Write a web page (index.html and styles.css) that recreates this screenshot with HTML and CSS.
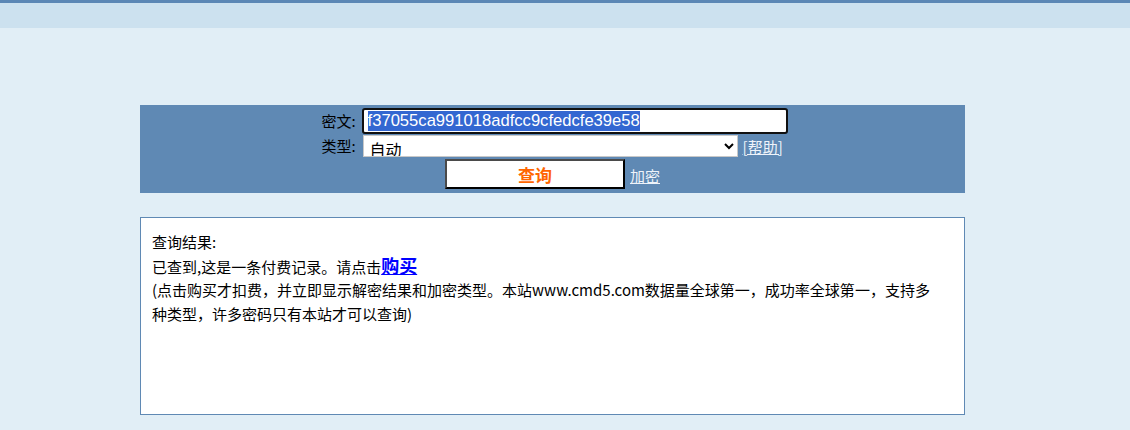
FILE: index.html
```html
<!DOCTYPE html>
<html lang="zh-CN">
<head>
    <meta charset="UTF-8">
    <title>cmd5 - 查询</title>
    <link rel="stylesheet" href="styles.css">
</head>
<body>
    <div class="topbar"></div>
    <div class="main">
        <form class="query-panel" onsubmit="return false">
            <div class="query-grid">
                <label class="label" for="ciphertext">密文:</label>
                <div class="field">
                    <input id="ciphertext" class="text-input" type="text" value="f37055ca991018adfcc9cfedcfe39e58" autofocus>
                </div>
                <label class="label" for="type">类型:</label>
                <div class="field">
                    <select id="type" class="type-select">
                        <option>自动</option>
                        <option>md5</option>
                        <option>sha1</option>
                    </select>
                    <a class="help-link" href="#">[帮助]</a>
                </div>
            </div>
            <div class="actions">
                <button class="query-button" type="submit">查询</button>
                <a class="encrypt-link" href="#">加密</a>
            </div>
        </form>

        <div class="result-box">
            <div>查询结果:</div>
            <div>已查到,这是一条付费记录。请点击<a class="buy-link" href="#">购买</a></div>
            <div>(点击购买才扣费，并立即显示解密结果和加密类型。本站www.cmd5.com数据量全球第一，成功率全球第一，支持多种类型，许多密码只有本站才可以查询)</div>
        </div>
    </div>

    <script>
        let box = document.getElementById("ciphertext");
        box.focus();
        box.select();
    </script>
</body>
</html>
```

FILE: styles.css
```css
body {
    margin: 0;
    background: #e1eef6;
    font-family: "Noto Sans CJK SC", sans-serif;
    font-size: 15px;
    color: #000;
}

.topbar {
    height: 25px;
    border-top: 3px solid #5b87b5;
    background: #cce1ef;
}

.main {
    width: 825px;
    margin: 77px 0 0 140px;
}

.query-panel {
    margin: 0;
    padding: 3px 0 4px;
    background: #5f89b4;
}

.query-grid {
    display: grid;
    grid-template-columns: auto 426px;
    justify-content: center;
    column-gap: 6px;
    row-gap: 1px;
    align-items: center;
    margin-left: 4px;
}

.label {
    text-align: right;
    line-height: 20px;
}

.field {
    display: flex;
    align-items: center;
    gap: 5px;
}

.text-input {
    box-sizing: border-box;
    width: 426px;
    height: 26px;
    padding: 0 4px;
    border: 2px solid #101010;
    border-radius: 3px;
    outline: none;
    font-family: "Liberation Sans", Arial, sans-serif;
    font-size: 16.6px;
    color: #000;
    background: #fff;
}

.text-input::selection {
    background: #3367d1;
    color: #fff;
}

.type-select {
    box-sizing: border-box;
    width: 375px;
    height: 22px;
    margin-left: 1px;
    border: 1px solid #c8c8c8;
    border-radius: 0;
    font-family: "Noto Sans CJK SC", sans-serif;
    font-size: 16px;
    padding: 0 2px;
    background: #fff;
}

.help-link,
.encrypt-link {
    color: #eef3fa;
    font-size: 15px;
}

.actions {
    display: flex;
    justify-content: center;
    align-items: center;
    gap: 5px;
    margin-top: 2px;
}

.query-button {
    box-sizing: border-box;
    width: 180px;
    height: 30px;
    border: 2px solid;
    border-color: #4a4a4a #000 #000 #4a4a4a;
    background: #fff;
    color: #ff6600;
    font-family: "Noto Sans CJK SC", sans-serif;
    font-size: 17px;
    font-weight: bold;
    cursor: pointer;
}

.encrypt-link {
    margin-top: 2px;
}

.result-box {
    box-sizing: border-box;
    height: 198px;
    margin-top: 24px;
    padding: 12px 24px 12px 11px;
    border: 1px solid #5f89b4;
    background: #fff;
    line-height: 23.6px;
}

.buy-link {
    color: #0000ff;
    font-size: 18px;
    font-weight: bold;
}
```
